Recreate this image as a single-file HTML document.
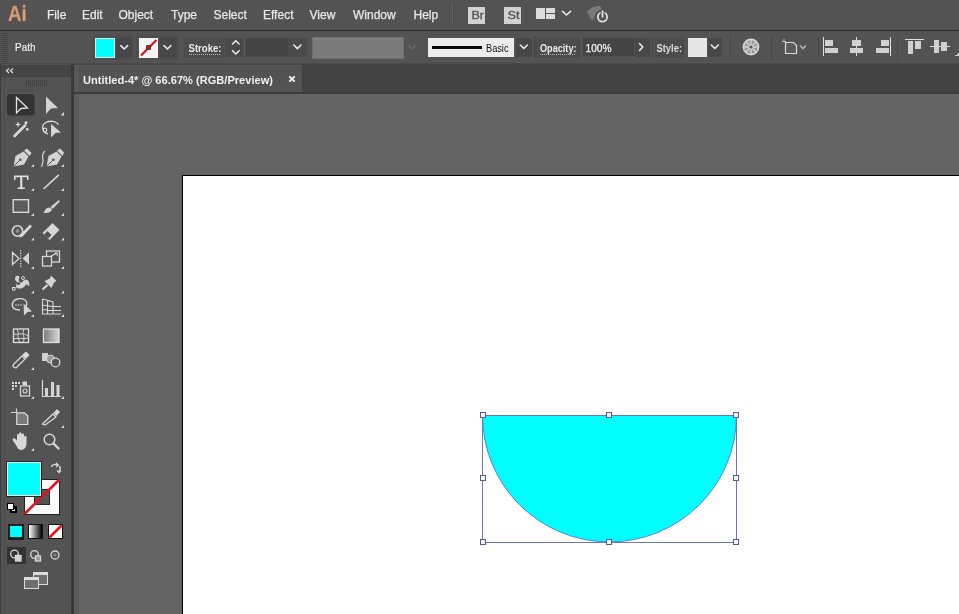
<!DOCTYPE html>
<html><head><meta charset="utf-8">
<style>
html,body{margin:0;padding:0;width:959px;height:614px;overflow:hidden;background:#535353}
svg{display:block;will-change:transform}
text{font-family:"Liberation Sans",sans-serif}
</style></head>
<body>
<svg width="959" height="614" viewBox="0 0 959 614" shape-rendering="crispEdges">
<!-- base panels -->
<rect x="0" y="0" width="959" height="30" fill="#535353"/>
<rect x="0" y="30" width="959" height="1" fill="#2c2c2c"/>
<rect x="0" y="31" width="959" height="33" fill="#535353"/>
<rect x="0" y="63" width="959" height="1" fill="#4a4a4a"/>
<rect x="0" y="64" width="959" height="1" fill="#383838"/>
<!-- toolbar -->
<rect x="0" y="64" width="72" height="550" fill="#535353"/>
<rect x="0" y="65" width="72" height="12" fill="#444444"/>
<rect x="1" y="77" width="70" height="1" fill="#4e4e4e"/>
<rect x="0" y="64" width="1" height="550" fill="#3c3c3c"/>
<rect x="4" y="77" width="1" height="537" fill="#4d4d4d"/>
<rect x="66" y="77" width="1" height="537" fill="#4f4f4f"/>
<rect x="71" y="64" width="3" height="550" fill="#3a3a3a"/>

<!-- toolbar content -->
<g shape-rendering="geometricPrecision">
<path d="M9 68.5 L6.5 70.8 L9 73 M13 68.5 L10.5 70.8 L13 73" stroke="#d8d8d8" stroke-width="1.3" fill="none"/>
<g fill="#424242">
<rect x="26" y="80" width="1" height="6"/><rect x="28" y="80" width="1" height="6"/><rect x="30" y="80" width="1" height="6"/><rect x="32" y="80" width="1" height="6"/>
<rect x="34" y="80" width="1" height="6"/><rect x="36" y="80" width="1" height="6"/><rect x="38" y="80" width="1" height="6"/><rect x="40" y="80" width="1" height="6"/>
<rect x="42" y="80" width="1" height="6"/><rect x="44" y="80" width="1" height="6"/><rect x="46" y="80" width="1" height="6"/>
</g>
<rect x="8" y="89" width="25" height="1" fill="#4a4a4a"/>
<rect x="8" y="91" width="25" height="1" fill="#4a4a4a"/>
<rect x="7" y="94" width="27.5" height="21.5" rx="3" fill="#333333"/>
<!-- flyout triangles -->
<g fill="#d8d8d8">
<path d="M64 112 V115.5 H60.5 Z"/>
<path d="M34 164 V167 H31 Z"/><path d="M64 164 V167 H61 Z"/>
<path d="M34 188 V191 H31 Z"/><path d="M64 188 V191 H61 Z"/>
<path d="M34 213 V216 H31 Z"/><path d="M64 213 V216 H61 Z"/>
<path d="M34 237.5 V240.5 H31 Z"/><path d="M64 237.5 V240.5 H61 Z"/>
<path d="M34 266 V269 H31 Z"/><path d="M64 266 V269 H61 Z"/>
<path d="M34 290.5 V293.5 H31 Z"/><path d="M64 290.5 V293.5 H61 Z"/>
<path d="M34 314 V317 H31 Z"/><path d="M64 314 V317 H61 Z"/>
<path d="M34 367 V370 H31 Z"/>
<path d="M34 396 V399 H31 Z"/><path d="M64 396 V399 H61 Z"/>
<path d="M64 425 V428 H61 Z"/>
<path d="M34 448 V451 H31 Z"/>
</g>
<!-- row1 -->
<path d="M16.5 97.5 L27.5 108 L21 108.5 L16.5 113 Z" fill="#333" stroke="#e2e2e2" stroke-width="1.3" stroke-linejoin="miter"/>
<path d="M46 96.5 L58 108 L51 108.6 L46 114 Z" fill="#d2d2d2"/>
<!-- row2 magic wand -->
<path d="M14.5 136 L25 125.5" stroke="#d8d8d8" stroke-width="2.6" stroke-linecap="round"/>
<path d="M18 121.5 L18.8 123.7 L21 124.5 L18.8 125.3 L18 127.5 L17.2 125.3 L15 124.5 L17.2 123.7 Z" fill="#e0e0e0"/>
<circle cx="26" cy="122.8" r="1.5" fill="#e0e0e0"/>
<circle cx="27.3" cy="129.4" r="1.3" fill="#e0e0e0"/>
<!-- lasso -->
<path d="M48 134 C42 132 41 126 45 123 C49 120 57 121 58.5 125" stroke="#d8d8d8" stroke-width="1.4" fill="none"/>
<circle cx="45" cy="130" r="1.8" fill="none" stroke="#d8d8d8" stroke-width="1.2"/>
<path d="M51 124 L61 132.5 L55.5 133 L51 137.5 Z" fill="#d4d4d4"/>
<!-- row3 pen -->
<path d="M13.5 166.5 L15.5 156 L23.5 151.5 L28.5 156.5 L24 164.5 Z" fill="#d4d4d4"/>
<path d="M24 150.5 L27 148.5 L31.5 153 L29.5 156 Z" fill="#d4d4d4"/>
<path d="M13.5 166.5 L19.5 160.5" stroke="#535353" stroke-width="1"/>
<circle cx="20.3" cy="159.7" r="1.3" fill="#535353"/>
<!-- curvature pen -->
<path d="M46.5 166.5 L48.5 156 L56.5 151.5 L61.5 156.5 L57 164.5 Z" fill="#d4d4d4"/>
<path d="M57 150.5 L60 148.5 L64 152.5 L62.5 156 Z" fill="#d4d4d4"/>
<path d="M46.5 166.5 L52.5 160.5" stroke="#535353" stroke-width="1"/>
<circle cx="53.3" cy="159.7" r="1.3" fill="#535353"/>
<path d="M45 151 C41 154 43 158 43 161 C43 164 41 165 42 167" stroke="#d8d8d8" stroke-width="1.2" fill="none"/>
<!-- row4 type -->
<path d="M14 175.5 H28.5 V180 H27 V177.3 H22.3 V187.5 H24.8 V189 H17.7 V187.5 H20.2 V177.3 H15.5 V180 H14 Z" fill="#e0e0e0"/>
<path d="M44 188.5 L58.3 175.3" stroke="#d8d8d8" stroke-width="1.6" stroke-linecap="round"/>
<!-- row5 rect -->
<rect x="13.2" y="199.7" width="15.3" height="12.6" fill="#5c5c5c" stroke="#e0e0e0" stroke-width="1.3"/>
<!-- paintbrush -->
<path d="M58.8 200 L60 201.2 L52.5 209 L50.5 207 Z" fill="#d4d4d4"/>
<path d="M50 207.5 L52 209.5 C51 212.5 47 213 43.5 213 C45 211 45 207.5 50 207.5 Z" fill="#d4d4d4"/>
<!-- row6 shaper -->
<circle cx="17.5" cy="231" r="5.2" fill="none" stroke="#d8d8d8" stroke-width="1.6"/>
<circle cx="17.5" cy="231" r="2" fill="#8a8a8a"/>
<path d="M21 236 L31 225.5" stroke="#d8d8d8" stroke-width="2.8"/>
<path d="M19 238 L21.5 233.5 L23.5 235.5 Z" fill="#d8d8d8"/>
<!-- eraser -->
<path d="M42.5 233 L52.5 223 L59.5 230 L49.5 240 Z" fill="#d8d8d8"/>
<path d="M44 234.5 L47.5 231 L51.5 235 L48 238.5 Z" fill="#535353"/>
<!-- row7 reflect -->
<path d="M12.5 252.5 L19 258.5 L12.5 264.5 Z" fill="none" stroke="#d8d8d8" stroke-width="1.3"/>
<path d="M29 252.5 L22.5 258.5 L29 264.5 Z" fill="#d4d4d4"/>
<path d="M20.7 250 V267" stroke="#d8d8d8" stroke-width="1.2" stroke-dasharray="1.3 1.3"/>
<!-- scale -->
<rect x="46.5" y="251" width="13" height="11" fill="none" stroke="#d8d8d8" stroke-width="1.3"/>
<rect x="42.5" y="256.5" width="9" height="9.5" fill="#535353" stroke="#d8d8d8" stroke-width="1.3"/>
<path d="M51 256 L57 253 M54.5 253 H57.2 V255.7" stroke="#d8d8d8" stroke-width="1.2" fill="none"/>
<!-- row8 warp -->
<path d="M15 279 C15 276 17 275 19 276 C20 278 18 279 19 281 C20 283 22 283 23 281 C25 279 27 279 28.5 281 C29.5 283 29.5 285 29 287 C28 284 26 284 25 286 C23.5 288 20 289.5 17 288 C15 287 16.5 285 17 283 C17.5 281 15 281 15 279 Z" fill="#d4d4d4"/>
<circle cx="18.5" cy="283.5" r="1.6" fill="#535353"/>
<circle cx="23" cy="278" r="1.5" fill="none" stroke="#d8d8d8" stroke-width="1"/>
<rect x="12.5" y="287.5" width="2.5" height="2.5" fill="none" stroke="#d8d8d8" stroke-width="1"/>
<!-- puppet pin -->
<path d="M51 275.5 L56.5 281 L54 282.5 L51.5 288 L44.5 281 L50 278.5 Z" fill="#d4d4d4"/>
<path d="M47.5 285 L42.5 289.5" stroke="#d8d8d8" stroke-width="2.2"/>
<!-- row9 shape builder -->
<path d="M20 310 C13 310 11 306 13 302 C15 298 22 298 25 300 C28 302 27 306 25 307" fill="none" stroke="#d8d8d8" stroke-width="1.4"/>
<g fill="#d8d8d8"><circle cx="16" cy="305" r="0.8"/><circle cx="18.5" cy="305" r="0.8"/><circle cx="21" cy="305" r="0.8"/></g>
<path d="M23.5 303.5 L32 311.5 L27.5 312 L24 315.5 Z" fill="#d4d4d4"/>
<!-- perspective grid -->
<g stroke="#d8d8d8" stroke-width="1.1" fill="none">
<path d="M42.5 299 V314 H61 M42.5 299 L53 302 V314 M47.5 300.5 V314 M42.5 305 L53 306.5 M42.5 309.5 L53 310.5 M53 306.5 H61 M53 310.5 H61"/>
</g>
<!-- row10 mesh -->
<rect x="13.5" y="329" width="15" height="13.5" fill="none" stroke="#e0e0e0" stroke-width="1.3"/>
<path d="M17 329.5 C20 333 16 337 20 342 M24 329.5 C21 334 26 337 23 342 M14 334 C19 335 23 332 28 336 M14 339 C18 337 23 340 28 338" stroke="#d8d8d8" stroke-width="1" fill="none"/>
<!-- gradient -->
<defs><linearGradient id="g1" x1="0" x2="1"><stop offset="0" stop-color="#777"/><stop offset="1" stop-color="#d8d8d8"/></linearGradient>
<linearGradient id="g2" x1="0" x2="1"><stop offset="0" stop-color="#fff"/><stop offset="1" stop-color="#000"/></linearGradient></defs>
<rect x="43.5" y="329" width="15.5" height="13.5" fill="url(#g1)" stroke="#e0e0e0" stroke-width="1.3"/>
<!-- row11 eyedropper -->
<path d="M13.5 367 L13 365 L22 356 L25 359 L16 368 Z" fill="none" stroke="#d8d8d8" stroke-width="1.3"/>
<path d="M22 355 L26 351.5 L29.5 355 L26 359 Z" fill="#d8d8d8"/>
<!-- blend -->
<rect x="42" y="353" width="6" height="8" fill="#d0d0d0"/>
<circle cx="50.5" cy="359" r="4" fill="#9a9a9a" stroke="#d8d8d8" stroke-width="1"/>
<circle cx="55.5" cy="362.5" r="4.3" fill="#535353" stroke="#d8d8d8" stroke-width="1.3"/>
<!-- row12 symbol sprayer -->
<g fill="#d8d8d8"><rect x="12" y="382" width="2" height="2"/><rect x="15" y="382" width="2" height="2"/><rect x="18" y="382" width="2" height="2"/><rect x="12" y="385" width="2" height="2"/><rect x="15" y="385" width="2" height="2"/><rect x="12" y="388" width="2" height="2"/></g>
<rect x="20.5" y="386" width="9" height="10" fill="none" stroke="#d8d8d8" stroke-width="1.3"/>
<circle cx="25" cy="391" r="2" fill="none" stroke="#d8d8d8" stroke-width="1.1"/>
<rect x="22.5" y="381.5" width="4.5" height="3.5" fill="#d8d8d8"/>
<!-- column graph -->
<path d="M42.5 380 V396.5 H61" stroke="#d8d8d8" stroke-width="1.2" fill="none"/>
<rect x="45" y="388" width="3" height="8" fill="#d4d4d4"/>
<rect x="51" y="382" width="3" height="14" fill="#d4d4d4"/>
<rect x="56.5" y="385" width="3" height="11" fill="#d4d4d4"/>
<!-- row13 artboard -->
<path d="M16.5 408.5 V412.5 M11 412.5 H16" stroke="#d8d8d8" stroke-width="1.2"/>
<path d="M16.8 412.8 H24.5 L27.8 416 V424.5 H16.8 Z" fill="#7a7a7a" stroke="#e0e0e0" stroke-width="1.2"/>
<!-- slice knife -->
<path d="M42.5 424 L53 414 L56 417 L45 425 Z" fill="none" stroke="#d8d8d8" stroke-width="1.3"/>
<path d="M53.5 413 L57 409 L60 412 L56.5 416 Z" fill="#d8d8d8"/>
<!-- row14 hand -->
<path d="M16 445 C14 442 12 440 13 438.5 C14 437.5 16 439 17 440.5 V435 C17 433.5 19 433.5 19 435 V439 V433.5 C19 432 21.5 432 21.5 433.5 V439 V434.5 C21.5 433 24 433 24 434.5 V440 V437 C24 435.5 26.5 435.5 26.5 437 V443 C26.5 447 24.5 450 21 450 C18.5 450 17 447.5 16 445 Z" fill="#d8d8d8"/>
<!-- zoom -->
<circle cx="49.5" cy="439.5" r="5.3" fill="none" stroke="#d8d8d8" stroke-width="1.5"/>
<path d="M53.5 443.5 L58.5 448.5" stroke="#d8d8d8" stroke-width="2.4" stroke-linecap="round"/>
</g>
<!-- fill / stroke -->
<g shape-rendering="crispEdges">
<rect x="24" y="479" width="36" height="36" fill="#1f1f1f"/>
<rect x="25" y="480" width="34" height="34" fill="#fafafa"/>
<rect x="34" y="489" width="16" height="16" fill="#2a2a2a"/>
<rect x="35" y="490" width="14" height="14" fill="#535353"/>
</g>
<path d="M24.5 514 L59.5 479.5" stroke="#e0141e" stroke-width="2.6" shape-rendering="geometricPrecision"/>
<g shape-rendering="crispEdges">
<rect x="6" y="461" width="36" height="36" fill="#262626"/>
<rect x="7" y="462" width="34" height="34" fill="#f0ffff"/>
<rect x="8" y="463" width="32" height="32" fill="#00ffff"/>
<rect x="10" y="506" width="6.5" height="6.5" fill="#000"/>
<rect x="12" y="509" width="2.5" height="2" fill="#ddd"/>
<rect x="7" y="503" width="7" height="7" fill="#000"/>
<rect x="8" y="504" width="5" height="5" fill="#fff"/>
</g>
<path d="M51.5 467 C52 464.5 55 464 58 465 M56 463 L58.3 465 L56.3 467 M59.5 466 C60.5 468 60.5 470 59 472 M57 470.5 L59 472.5 L61 470.5" stroke="#d8d8d8" stroke-width="1.3" fill="none" shape-rendering="geometricPrecision"/>
<!-- mode buttons -->
<g shape-rendering="crispEdges">
<rect x="8" y="524" width="16" height="16" fill="#1e1e1e"/>
<rect x="10" y="526" width="12" height="11" fill="#00ffff"/>
<rect x="28" y="524" width="15" height="15" fill="#111"/>
<rect x="29" y="525" width="13" height="13" fill="url(#g2)"/>
<rect x="48" y="524" width="15" height="15" fill="#111"/>
<rect x="49" y="525" width="13" height="13" fill="#fff"/>
</g>
<path d="M49.5 537.5 L61.5 525.5" stroke="#e8141e" stroke-width="2.6" shape-rendering="geometricPrecision"/>
<rect x="7" y="547" width="18.5" height="17" fill="#333"/>
<g shape-rendering="geometricPrecision" fill="none" stroke="#d8d8d8" stroke-width="1.3">
<circle cx="14.5" cy="554" r="3.8"/><rect x="15.5" y="555.5" width="5.5" height="5.5" fill="#cfcfcf"/>
<circle cx="34.5" cy="554.5" r="3.8"/><rect x="35.5" y="556" width="5" height="5" fill="#999"/>
<circle cx="55" cy="555" r="4"/><circle cx="55" cy="555" r="1.5" fill="#888" stroke="none"/>
</g>
<g shape-rendering="crispEdges">
<rect x="33" y="572" width="15" height="13" fill="#dcdcdc"/>
<rect x="34" y="575" width="13" height="9" fill="#6e6e6e"/>
<rect x="24" y="577" width="15" height="12" fill="#dcdcdc"/>
<rect x="25" y="580" width="13" height="8" fill="#6e6e6e"/>
</g>

<!-- tab bar -->
<rect x="74" y="64" width="885" height="30" fill="#424242"/>
<rect x="74" y="65" width="228" height="27" fill="#535353"/>
<rect x="75" y="65" width="1" height="27" fill="#5c5c5c"/>
<rect x="77" y="65" width="1" height="27" fill="#5a5a5a"/>
<rect x="74" y="65" width="228" height="1" fill="#5a5a5a"/>
<rect x="74" y="92" width="885" height="2" fill="#3c3c3c"/>
<!-- canvas -->
<rect x="74" y="94" width="885" height="520" fill="#636363"/>
<rect x="74" y="94" width="5" height="520" fill="#5b5b5b"/>
<!-- artboard -->
<rect x="182" y="175" width="777" height="439" fill="#000"/>
<rect x="183" y="176" width="776" height="438" fill="#fff"/>
<!-- shape -->
<path d="M736.5 415.5 A127 126.5 0 0 1 482.5 415.5 Z" fill="#00ffff" stroke="#5a7ee0" stroke-width="1" shape-rendering="geometricPrecision"/>
<rect x="482.5" y="415.5" width="254" height="126.5" fill="none" stroke="#6877c8" stroke-width="1"/>
<g fill="#f4f8ff" stroke="#535c98" stroke-width="1">
<rect x="480.5" y="412.5" width="5" height="5"/>
<rect x="606.5" y="412.5" width="5" height="5"/>
<rect x="733.5" y="412.5" width="5" height="5"/>
<rect x="480.5" y="475.5" width="5" height="5"/>
<rect x="733.5" y="475.5" width="5" height="5"/>
<rect x="480.5" y="539.5" width="5" height="5"/>
<rect x="606.5" y="539.5" width="5" height="5"/>
<rect x="733.5" y="539.5" width="5" height="5"/>
</g>

<!-- control bar -->
<g>
<g fill="#484848">
<rect x="1" y="33" width="7" height="1"/><rect x="1" y="35" width="7" height="1"/><rect x="1" y="37" width="7" height="1"/><rect x="1" y="39" width="7" height="1"/>
<rect x="1" y="41" width="7" height="1"/><rect x="1" y="43" width="7" height="1"/><rect x="1" y="45" width="7" height="1"/><rect x="1" y="47" width="7" height="1"/>
<rect x="1" y="49" width="7" height="1"/><rect x="1" y="51" width="7" height="1"/><rect x="1" y="53" width="7" height="1"/><rect x="1" y="55" width="7" height="1"/>
<rect x="1" y="57" width="7" height="1"/><rect x="1" y="59" width="7" height="1"/><rect x="1" y="61" width="7" height="1"/>
</g>
<text x="15" y="50.5" font-size="10.5" fill="#ececec" stroke="#ececec" stroke-width="0.2" textLength="20.5" lengthAdjust="spacingAndGlyphs">Path</text>
<!-- fill swatch -->
<rect x="92" y="35" width="41" height="25" fill="#4e4e4e"/>
<rect x="95" y="38" width="20" height="20" fill="#dfe8e8"/>
<rect x="96" y="39" width="18" height="18" fill="#00ffff"/>
<rect x="117" y="38" width="15" height="20" fill="#474747"/>
<!-- stroke swatch -->
<rect x="136" y="35" width="42" height="25" fill="#4e4e4e"/>
<rect x="139" y="38" width="19" height="20" fill="#f4f4f4"/>
<rect x="160" y="38" width="16" height="20" fill="#474747"/>

<path d="M141 55.5 L156.5 40" stroke="#d0101a" stroke-width="2.2" shape-rendering="geometricPrecision"/>
<rect x="146.6" y="45.6" width="3.8" height="3.8" fill="#d0101a" stroke="#333" stroke-width="0.8" shape-rendering="geometricPrecision"/>
<rect x="177" y="36" width="1" height="23" fill="#454545"/>
<!-- Stroke label -->
<rect x="184" y="37" width="40" height="21" fill="#4c4c4c"/>
<text x="188.5" y="52" font-size="10.5" font-weight="700" fill="#ececec" textLength="33" lengthAdjust="spacingAndGlyphs">Stroke:</text>
<path d="M189 54.5 H221" stroke="#bdbdbd" stroke-width="1" stroke-dasharray="1 1"/>
<!-- stroke weight widget -->
<rect x="225" y="38" width="82" height="19" fill="#4a4a4a"/>
<rect x="228" y="39" width="14" height="17" fill="#484848"/>
<rect x="244" y="39" width="1" height="17" fill="#5e5e5e"/>
<rect x="246" y="38" width="42" height="18" fill="#444444"/>
<!-- profile disabled -->
<rect x="312" y="37" width="92" height="22" fill="#6e6e6e"/>
<rect x="313" y="38" width="90" height="20" fill="#7b7b7b"/>
<rect x="313" y="38" width="90" height="1" fill="#878787"/>
<path d="M408.5 45.5 L412 49 L415.5 45.5" stroke="#686868" stroke-width="1.4" fill="none" shape-rendering="geometricPrecision"/>
<!-- brush -->
<rect x="428" y="38" width="86" height="19" fill="#ececec"/>
<rect x="432" y="46" width="50" height="3" fill="#0a0a0a"/>
<text x="486" y="52" font-size="10.5" fill="#111" textLength="22.5" lengthAdjust="spacingAndGlyphs">Basic</text>
<rect x="516" y="38" width="16" height="19" fill="#474747"/>
<rect x="534" y="36" width="1" height="23" fill="#454545"/>
<!-- opacity -->
<rect x="535" y="37" width="45" height="21" fill="#4c4c4c"/>
<text x="540" y="52" font-size="10.5" font-weight="700" fill="#ececec" textLength="36.5" lengthAdjust="spacingAndGlyphs">Opacity:</text>
<path d="M540 54.5 H576" stroke="#bdbdbd" stroke-width="1" stroke-dasharray="1 1"/>
<rect x="583" y="38" width="51" height="18" fill="#444444"/>
<text x="585.5" y="51.5" font-size="10.5" fill="#f2f2f2" stroke="#f2f2f2" stroke-width="0.25" textLength="26" lengthAdjust="spacingAndGlyphs">100%</text>
<rect x="635" y="38" width="15" height="19" fill="#484848"/>
<rect x="652" y="36" width="1" height="23" fill="#454545"/>
<!-- style -->
<rect x="654" y="37" width="30" height="21" fill="#4c4c4c"/>
<text x="656.5" y="52" font-size="10.5" font-weight="700" fill="#dedede" textLength="25.5" lengthAdjust="spacingAndGlyphs">Style:</text>
<rect x="688" y="38" width="19" height="19" fill="#e6e6e6"/>
<rect x="708" y="38" width="14" height="19" fill="#484848"/>
<rect x="730" y="36" width="1" height="23" fill="#484848"/>
<rect x="771" y="36" width="1" height="23" fill="#484848"/>
<rect x="818" y="36" width="1" height="23" fill="#484848"/>
<rect x="897" y="36" width="1" height="23" fill="#484848"/>
<g stroke="#e8e8e8" stroke-width="1.6" fill="none" shape-rendering="geometricPrecision" stroke-linecap="round" stroke-linejoin="round">
<path d="M120.8 45.6 L124.2 49 L127.6 45.6"/>
<path d="M164 45.6 L167.4 49 L170.8 45.6"/>
<path d="M232.5 44 L235.8 40.7 L239.1 44"/>
<path d="M232.5 50.7 L235.8 54 L239.1 50.7"/>
<path d="M293.8 45 L297.4 48.6 L301 45"/>
<path d="M520.3 45 L523.8 48.5 L527.3 45"/>
<path d="M639.5 43.5 L642.8 47 L639.5 50.5"/>
<path d="M711.3 45 L714.8 48.5 L718.3 45"/>
</g>
</g>


<!-- menu right icons -->
<rect x="452" y="4" width="1" height="22" fill="#626262"/>
<rect x="453" y="4" width="1" height="22" fill="#4a4a4a"/>
<rect x="468" y="7" width="17" height="17" fill="#d2d2d2"/>
<text x="471.5" y="19" font-size="11.5" fill="#505050" stroke="#505050" stroke-width="0.3" textLength="12.5" lengthAdjust="spacingAndGlyphs">Br</text>
<rect x="504" y="7" width="17" height="17" fill="#d2d2d2"/>
<text x="507.5" y="19" font-size="11.5" fill="#505050" stroke="#505050" stroke-width="0.3" textLength="12" lengthAdjust="spacingAndGlyphs">St</text>
<rect x="536" y="8" width="9" height="11" fill="#dcdcdc"/>
<rect x="546" y="8" width="9" height="5" fill="#dcdcdc"/>
<rect x="546" y="14" width="9" height="5" fill="#dcdcdc"/>
<path d="M562.5 11.3 L566.5 15 L570.5 11.3" stroke="#e8e8e8" stroke-width="1.6" fill="none" stroke-linecap="round" stroke-linejoin="round" shape-rendering="geometricPrecision"/>
<g shape-rendering="geometricPrecision">
<path d="M587 12 C590 8 595 6 600 6 L602 9 C598 10 595 13 594 18 L592 21 C590 18 589 15 587 12 Z" fill="#7a7a7a"/>
<circle cx="602.5" cy="17" r="4.6" fill="none" stroke="#e0e0e0" stroke-width="1.8"/>
<rect x="600.5" y="10" width="4" height="8" fill="#535353"/>
<rect x="601.6" y="10.5" width="1.8" height="7" fill="#e0e0e0"/>
</g>

<!-- control bar right icons -->
<g shape-rendering="geometricPrecision">
<circle cx="751" cy="47" r="7.6" fill="#9a9a9a" stroke="#d4d4d4" stroke-width="1.6"/>
<g stroke="#d4d4d4" stroke-width="1.4">
<path d="M751 39.5 V54.5 M743.5 47 H758.5 M745.7 41.7 L756.3 52.3 M756.3 41.7 L745.7 52.3"/>
</g>
<circle cx="751" cy="47" r="1.6" fill="#555"/>
</g>
<path d="M785.5 42.5 H793.5 L796.5 45.5 V53.5 H785.5 Z" fill="#5a5a5a" stroke="#dadada" stroke-width="1.2" shape-rendering="geometricPrecision"/>
<path d="M782 41.5 L786 41.5 M784 39 V41.5" stroke="#bbb" stroke-width="1" shape-rendering="geometricPrecision"/>
<path d="M800 45.5 L803 48.5 L806 45.5" stroke="#bdbdbd" stroke-width="1.4" fill="none" shape-rendering="geometricPrecision"/>
<g fill="#d0d0d0">
<rect x="823" y="37" width="1.3" height="19" fill="#e0e0e0"/>
<rect x="825" y="40" width="8" height="5.5"/>
<rect x="825" y="48" width="13" height="5"/>
<rect x="856" y="37" width="1.2" height="19" fill="#e0e0e0"/>
<rect x="852" y="40" width="9" height="5.5"/>
<rect x="850" y="48" width="13" height="5"/>
<rect x="890" y="37" width="1.3" height="19" fill="#e0e0e0"/>
<rect x="881" y="40" width="8" height="5.5"/>
<rect x="876" y="48" width="13" height="5"/>
<rect x="904.5" y="38.8" width="19" height="1.4" fill="#e0e0e0"/>
<rect x="908" y="41" width="5" height="13"/>
<rect x="915" y="41" width="6" height="8"/>
<rect x="930" y="45.8" width="20" height="1.3" fill="#e0e0e0"/>
<rect x="934" y="40" width="5" height="13"/>
<rect x="941" y="42" width="6" height="9"/>
</g>
<path d="M959 53 L955 55.5 H959 Z" fill="#cfcfcf"/>

<!-- menu text -->
<g fill="#e8e8e8" font-size="12" stroke="#e8e8e8" stroke-width="0.25">
<text x="47" y="19">File</text>
<text x="82" y="19">Edit</text>
<text x="118.5" y="19">Object</text>
<text x="171" y="19">Type</text>
<text x="213.5" y="19">Select</text>
<text x="263" y="19">Effect</text>
<text x="309.5" y="19">View</text>
<text x="353" y="19">Window</text>
<text x="413.5" y="19">Help</text>
</g>
<text x="8" y="20.5" font-size="22" font-weight="700" fill="#d9a27c" stroke="#b07450" stroke-width="0.4" textLength="18.8" lengthAdjust="spacingAndGlyphs">Ai</text>

<!-- tab text -->
<text x="83" y="84" font-size="11" font-weight="700" fill="#f0f0f0" textLength="190" lengthAdjust="spacingAndGlyphs">Untitled-4* @ 66.67% (RGB/Preview)</text>
<path d="M289.3 76.3 L294.7 81.7 M294.7 76.3 L289.3 81.7" stroke="#f2f2f2" stroke-width="1.9" shape-rendering="geometricPrecision"/>
</svg>
</body></html>
